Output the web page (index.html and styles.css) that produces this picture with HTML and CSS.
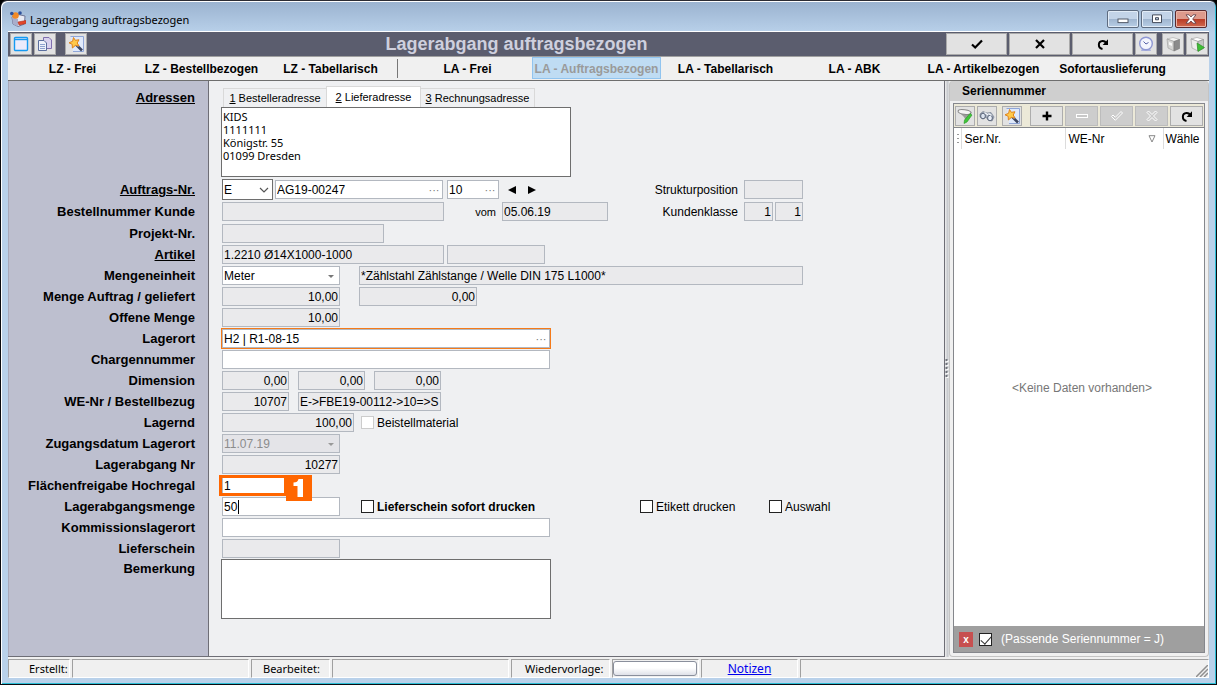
FILE: index.html
```
<!DOCTYPE html>
<html lang="de">
<head>
<meta charset="utf-8">
<title>Lagerabgang auftragsbezogen</title>
<link rel="stylesheet" href="styles.css">
</head>
<body>
<svg class="defs" aria-hidden="true">
  <symbol id="i-check" viewBox="0 0 12 12"><path d="M1 6.5 4.2 9.5 11 2.5" fill="none" stroke="currentColor" stroke-width="2.2"/></symbol>
  <symbol id="i-x" viewBox="0 0 12 12"><path d="M2 2 10 10M10 2 2 10" fill="none" stroke="currentColor" stroke-width="2.2"/></symbol>
  <symbol id="i-redo" viewBox="0 0 12 12"><path d="M5.500 11C0.500 10 .8 3.300 5.500 3 7 2.900 8.300 3.500 9.300 5" fill="none" stroke="currentColor" stroke-width="2"/><path d="M11 1.300V7H5.600Z" fill="currentColor"/></symbol>
  <symbol id="i-wand" viewBox="0 0 16 16"><path d="M2.5 .5H15.5V15.5H5" fill="#dfe9fb" stroke="#8fa6d8"/><path d="M8 8.5 14 14.5" stroke="#3b4560" stroke-width="2.6"/><path d="M9 9 10.5 10.5" stroke="#9aa4c0" stroke-width="1.4"/><path d="M5.5 1.5 7.3 4.3 11 3.8 9.2 7 11 10 7.4 9.4 4.4 12 4.2 8.3 1 6.8 4.6 5.3Z" fill="#ffc94a" stroke="#e0851c"/></symbol>
  <symbol id="i-box" viewBox="0 0 16 16"><path d="M2 3 8 1.5 14.5 3.5 9 5.5Z" fill="#f4f4f2" stroke="#aaa" stroke-width=".6"/><path d="M2 3 9 5.5V15L3 12Z" fill="#d4d4d2" stroke="#999" stroke-width=".6"/><path d="M9 5.5 14.5 3.5V12.5L9 15Z" fill="#8b8b8b" stroke="#777" stroke-width=".6"/><path d="M4 6 7 7.2V10L4 8.8Z" fill="#f8f8f8"/></symbol>
  <symbol id="i-boxlight" viewBox="0 0 16 16"><path d="M2 3 8 1.5 14.5 3.500 9 5.5Z" fill="#fff" stroke="#999" stroke-width=".6"/><path d="M2 3 9 5.5V15L3 12Z" fill="#ececea" stroke="#999" stroke-width=".6"/><path d="M9 5.500 14.5 3.5V12.5L9 15Z" fill="#c4c6c4" stroke="#888" stroke-width=".6"/></symbol>
</svg>
<div class="window">
  <header class="titlebar">
    <svg class="app-icon" viewBox="0 0 16 16" aria-hidden="true"><path d="M2 6 6 3 15 5 14.5 13 8 15.5 3 13Z" fill="#e9ebf4" stroke="#6f7494"/><path d="M2 6 8 8V15.5L3 13Z" fill="#a9aecb"/><circle cx="5.500" cy="4.500" r="3.300" fill="#f28a26"/><circle cx="1.800" cy="2.500" r="1.800" fill="#2d519c"/><circle cx="10" cy="2" r="1.800" fill="#2d519c"/><path d="M8 11 16 9.500V12.500L9 14Z" fill="#e2472b" stroke="#b02b18" stroke-width=".6"/></svg>
    <span class="title">Lagerabgang auftragsbezogen</span>
    <div class="win-buttons">
      <button type="button" aria-label="Minimieren"><svg viewBox="0 0 12 10"><rect x="1" y="5" width="10" height="3.6" fill="#fff" stroke="#555c6b"/></svg></button>
      <button type="button" aria-label="Maximieren"><svg viewBox="0 0 12 10"><path d="M1.5 .9H10.5V8.6H1.5ZM4.5 3.7H7.5V5.8H4.5Z" fill="#fff" fill-rule="evenodd" stroke="#444b5a"/></svg></button>
      <button type="button" class="win-close" aria-label="Schließen"><svg viewBox="0 0 12 10"><path d="M1 .8H4L6 3 8 .8H11L7.7 5 11 9.2H8L6 7 4 9.2H1L4.300 5Z" fill="#fff" stroke="#5b3a44" stroke-width=".8"/></svg></button>
    </div>
  </header>
  <div class="client">
    <div class="toolbar">
      <div class="tools">
        <button type="button" aria-label="Fenster"><svg viewBox="0 0 16 16"><rect x="1.5" y="1.500" width="13" height="13" rx="1" fill="#ecebfb" stroke="#159af2" stroke-width="1.400"/><path d="M1 3.500H15" stroke="#159af2" stroke-width="1.400"/></svg></button>
        <button type="button" aria-label="Kopieren"><svg viewBox="0 0 16 16"><path d="M6.500 1.500H12L14.500 4V12.500H6.500Z" fill="#d9d2ee" stroke="#7f6fae"/><path d="M1.500 4.500H7L9.500 7V14.500H1.500Z" fill="#eef2fb" stroke="#5b6f9e"/><path d="M3 8.500H8M3 10.500H8M3 12.500H8" stroke="#8ea3cf"/></svg></button>
        <button type="button" class="wand" aria-label="Assistent"><svg><use href="#i-wand"/></svg></button>
      </div>
      <h1>Lagerabgang auftragsbezogen</h1>
      <div class="actions">
        <button type="button" class="big" aria-label="Übernehmen"><svg><use href="#i-check"/></svg></button>
        <button type="button" class="big" aria-label="Abbrechen"><svg><use href="#i-x"/></svg></button>
        <button type="button" class="big" aria-label="Aktualisieren"><svg><use href="#i-redo"/></svg></button>
        <button type="button" aria-label="Uhr"><svg viewBox="0 0 16 16"><path d="M4 12.500 3 15H13L12 12.500Z" fill="#a9b0dd"/><circle cx="8" cy="7.500" r="6.300" fill="#f3f4fd" stroke="#8f98d4" stroke-width="1.400"/><path d="M5.500 5.500 8 8 10.500 6.500" fill="none" stroke="#5560a8"/></svg></button>
        <button type="button" class="box" aria-label="Artikel"><svg><use href="#i-box"/></svg></button>
        <button type="button" aria-label="Artikel öffnen"><svg viewBox="0 0 16 16"><use href="#i-boxlight"/><path d="M8 7 15.500 11.500 9 15.500Z" fill="#3fbf35" stroke="#278a20" stroke-width=".6"/></svg></button>
      </div>
    </div>
    <nav class="modes">
      <button type="button">LZ - Frei</button>
      <button type="button">LZ - Bestellbezogen</button>
      <button type="button">LZ - Tabellarisch</button>
      <span class="sep"></span>
      <button type="button">LA - Frei</button>
      <button type="button" class="active" disabled>LA - Auftragsbezogen</button>
      <button type="button">LA - Tabellarisch</button>
      <button type="button">LA - ABK</button>
      <button type="button">LA - Artikelbezogen</button>
      <button type="button">Sofortauslieferung</button>
    </nav>
    <main class="main">
      <form class="form">
        <div class="row address">
          <a class="lbl" href="#adresse" id="l-adr">Adressen</a>
          <div class="stack">
            <div class="tabs" role="tablist">
              <button type="button" role="tab"><u>1</u> Bestelleradresse</button>
              <button type="button" role="tab" class="on" aria-selected="true"><u>2</u> Lieferadresse</button>
              <button type="button" role="tab"><u>3</u> Rechnungsadresse</button>
            </div>
            <textarea id="adresse" class="addr-text" aria-labelledby="l-adr">KIDS
1111111
Königstr. 55
01099 Dresden</textarea>
          </div>
        </div>
        <div class="rows loose">
          <div class="row">
            <a class="lbl" href="#auftrag" id="l-auf">Auftrags-Nr.</a>
            <span class="pick dark w51"><select aria-label="Auftragsart"><option>E</option></select><svg viewBox="0 0 10 10"><path d="M1 3 5 7 9 3" fill="none" stroke="#555" stroke-width="1.200"/></svg></span>
            <span class="pick w168 g2"><input id="auftrag" class="edit" aria-labelledby="l-auf" value="AG19-00247"><button type="button" class="dots" aria-label="Auftrag suchen">···</button></span>
            <span class="pick w52 g4"><input class="edit" aria-label="Position" value="10"><button type="button" class="dots" aria-label="Position suchen">···</button></span>
            <button type="button" class="step g8" aria-label="Zurück"><svg viewBox="0 0 10 8"><path d="M9 0V8L1 4Z"/></svg></button>
            <button type="button" class="step g8" aria-label="Weiter"><svg viewBox="0 0 10 8"><path d="M1 0V8L9 4Z"/></svg></button>
            <label class="side struct" for="struktur">Strukturposition</label>
            <input id="struktur" class="w59" readonly>
          </div>
          <div class="row">
            <label class="lbl" for="bestell">Bestellnummer Kunde</label>
            <input id="bestell" class="w222" readonly>
            <label class="side vom" for="vom">vom</label>
            <input id="vom" class="w106" readonly value="05.06.19">
            <label class="side klasse" for="klasse">Kundenklasse</label>
            <input id="klasse" class="w29 num" readonly value="1">
            <input class="w28 num g2" aria-label="Kundenklasse 2" readonly value="1">
          </div>
          <div class="row">
            <label class="lbl" for="projekt">Projekt-Nr.</label>
            <input id="projekt" class="w162" readonly>
          </div>
        </div>
        <div class="rows">
          <div class="row">
            <a class="lbl" href="#artikel" id="l-art">Artikel</a>
            <input id="artikel" class="w222" aria-labelledby="l-art" readonly value="1.2210 Ø14X1000-1000">
            <input class="w98 g3" aria-label="Artikel Zusatz" readonly>
          </div>
          <div class="row">
            <label class="lbl" for="einheit">Mengeneinheit</label>
            <span class="pick w118"><select id="einheit"><option>Meter</option></select><svg viewBox="0 0 10 10"><path d="M2 4H8L5 7Z" fill="#777"/></svg></span>
            <input class="w444 g19" aria-label="Bezeichnung" readonly value="*Zählstahl Zählstange / Welle DIN 175 L1000*">
          </div>
          <div class="row">
            <label class="lbl" for="menge">Menge Auftrag / geliefert</label>
            <input id="menge" class="w118 num" readonly value="10,00">
            <input class="w118 num g19" aria-label="Menge geliefert" readonly value="0,00">
          </div>
          <div class="row">
            <label class="lbl" for="offen">Offene Menge</label>
            <input id="offen" class="w118 num" readonly value="10,00">
          </div>
          <div class="row">
            <label class="lbl" for="lagerort">Lagerort</label>
            <span class="pick w328 marked"><input id="lagerort" class="edit" value="H2 | R1-08-15"><button type="button" class="dots" aria-label="Lagerort suchen">···</button></span>
          </div>
          <div class="row">
            <label class="lbl" for="charge">Chargennummer</label>
            <input id="charge" class="edit w328">
          </div>
          <div class="row">
            <label class="lbl" for="dim">Dimension</label>
            <input id="dim" class="w67 num" readonly value="0,00">
            <input class="w67 num g9" aria-label="Dimension 2" readonly value="0,00">
            <input class="w67 num g9" aria-label="Dimension 3" readonly value="0,00">
          </div>
          <div class="row">
            <label class="lbl" for="wenr">WE-Nr / Bestellbezug</label>
            <input id="wenr" class="w67 num" readonly value="10707">
            <input class="w143 g9 tight" aria-label="Bestellbezug" readonly value="E-&gt;FBE19-00112-&gt;10=&gt;S">
          </div>
          <div class="row">
            <label class="lbl" for="lagernd">Lagernd</label>
            <input id="lagernd" class="w132 num" readonly value="100,00">
            <label class="check g7 off"><input type="checkbox" disabled>Beistellmaterial</label>
          </div>
          <div class="row">
            <label class="lbl" for="zugang">Zugangsdatum Lagerort</label>
            <span class="pick w118 disabled"><select id="zugang" disabled><option>11.07.19</option></select><svg viewBox="0 0 10 10"><path d="M2 4H8L5 7Z" fill="#999"/></svg></span>
          </div>
          <div class="row">
            <label class="lbl" for="abgangnr">Lagerabgang Nr</label>
            <input id="abgangnr" class="w118 num" readonly value="10277">
          </div>
          <div class="row">
            <label class="lbl" for="flaeche">Flächenfreigabe Hochregal</label>
            <span class="pick w64 callout"><input id="flaeche" class="edit" value="1"><span class="frame"></span><svg class="badge" viewBox="0 0 26 26" role="img" aria-label="Schritt 1"><rect width="26" height="26" fill="#f60"/><path d="M17 4V22H11.500V11H7.500V7.500C10.500 7.500 12 6.500 12.500 4Z" fill="#fff"/></svg></span>
          </div>
          <div class="row">
            <label class="lbl" for="abgangsmenge">Lagerabgangsmenge</label>
            <span class="pick w118"><input id="abgangsmenge" class="edit" value="50"><span class="caret"></span></span>
            <label class="check bold g21"><input type="checkbox">Lieferschein sofort drucken</label>
            <label class="check etikett"><input type="checkbox">Etikett drucken</label>
            <label class="check auswahl"><input type="checkbox">Auswahl</label>
          </div>
          <div class="row">
            <label class="lbl" for="kommission">Kommissionslagerort</label>
            <input id="kommission" class="edit w328">
          </div>
          <div class="row">
            <label class="lbl" for="lieferschein">Lieferschein</label>
            <input id="lieferschein" class="w118" readonly>
          </div>
          <div class="row note">
            <label class="lbl" for="bemerkung">Bemerkung</label>
            <textarea id="bemerkung" class="note-text"></textarea>
          </div>
        </div>
      </form>
      <div class="splitter"><svg viewBox="0 0 4 20" aria-hidden="true"><path d="M2.500 1V20" stroke="#fff" stroke-width="2" stroke-dasharray="2 2"/><path d="M1.500 0V20" stroke="#70747c" stroke-width="2" stroke-dasharray="2 2"/></svg></div>
      <aside class="panel">
        <h2>Seriennummer</h2>
        <div class="panel-body">
          <div class="grid-tools">
            <button type="button" aria-label="Filter"><svg viewBox="0 0 16 16"><path d="M1 3 7 9 9 13 11 12 10.500 9 15 4Z" fill="#9a9c9a"/><ellipse cx="7.500" cy="4" rx="6.500" ry="2.300" fill="#f4f4f4" stroke="#888" transform="rotate(8 7.500 4)"/><path d="M7.500 12 13 5.500 15 7 10 14 7 15.500Z" fill="#3fc63a" stroke="#25951f" stroke-width=".6"/></svg></button>
            <button type="button" aria-label="Suchen"><svg viewBox="0 0 16 16"><path d="M1 6 4 3.500 8 5 12 4.500 15 9 13 13 9 12 7 9 4 11 1 9Z" fill="#a9b2c0" stroke="#6a7485" stroke-width=".6"/><ellipse cx="4" cy="8" rx="2.400" ry="2.800" fill="#dbe3ef" stroke="#596377"/><ellipse cx="11" cy="10" rx="2.400" ry="2.800" fill="#e8eef7" stroke="#596377"/><path d="M5.500 4.500 9 7M9.500 5.500 12.500 7.500" stroke="#f4f7fb" stroke-width="1.200"/></svg></button>
            <button type="button" class="wand" aria-label="Assistent"><svg><use href="#i-wand"/></svg></button>
            <button type="button" class="mid first" aria-label="Hinzufügen"><svg viewBox="0 0 12 12"><path d="M6 1.500V10.500M1.500 6H10.500" stroke="#000" stroke-width="2.400"/></svg></button>
            <button type="button" class="mid" disabled aria-label="Entfernen"><svg viewBox="0 0 12 12"><rect x=".5" y="4.500" width="11" height="3" fill="#c8c8c8" stroke="#fff"/></svg></button>
            <button type="button" class="mid" disabled aria-label="Speichern"><svg viewBox="0 0 12 12"><path d="M.5 6.500 2 5 4.300 7.300 10 1.500 11.500 3 4.300 10.300Z" fill="#c8c8c8" stroke="#fff"/></svg></button>
            <button type="button" class="mid" disabled aria-label="Verwerfen"><svg viewBox="0 0 12 12"><path d="M1 2.500 2.500 1 6 4.500 9.500 1 11 2.500 7.500 6 11 9.500 9.500 11 6 7.500 2.500 11 1 9.500 4.500 6Z" fill="#c8c8c8" stroke="#fff"/></svg></button>
            <button type="button" class="mid" aria-label="Aktualisieren"><svg><use href="#i-redo"/></svg></button>
          </div>
          <table class="grid">
            <thead><tr><th class="c0" aria-label="Markierung"><svg viewBox="0 0 2 12" aria-hidden="true"><path d="M1 1V11" stroke="#333" stroke-dasharray="1 3"/></svg></th><th class="c1">Ser.Nr.</th><th class="c2"><span>WE-Nr<svg viewBox="0 0 8 8" aria-hidden="true"><path d="M1 .7H7L4 7Z" fill="none" stroke="#888"/></svg></span></th><th class="c3">Wähle</th></tr></thead>
          </table>
          <p class="empty">&lt;Keine Daten vorhanden&gt;</p>
          <div class="filter">
            <button type="button" aria-label="Filter entfernen">x</button>
            <label class="check"><input type="checkbox" checked>(Passende Seriennummer = J)</label>
          </div>
        </div>
      </aside>
    </main>
    <footer class="status">
      <span class="s-erst">Erstellt:</span>
      <span class="s-wide"></span>
      <span class="s-bearb">Bearbeitet:</span>
      <span class="s-wide"></span>
      <span class="s-wied">Wiedervorlage:</span>
      <span class="s-date"><button type="button" aria-label="Wiedervorlage setzen"></button></span>
      <span class="s-not"><a href="#notizen">Notizen</a></span>
      <span class="s-rest"><svg viewBox="0 0 12 12" aria-hidden="true"><path d="M0 12 12 0M4 12 12 4M8 12 12 8" stroke="#8f8f8f" stroke-width="1.500"/></svg></span>
    </footer>
  </div>
</div>
</body>
</html>
```
FILE: styles.css
```
* { box-sizing: border-box; }
body { margin: 0; font: 12px "Liberation Sans", Arial, sans-serif; color: #000; background: #000; }
button, input, select, textarea { font: inherit; color: inherit; margin: 0; padding: 0; border: 0; border-radius: 0; }
button { background: none; }
.defs { position: absolute; width: 0; height: 0; }

.window { min-height: 100vh; display: flex; flex-direction: column; padding: 0 7px 6px; border: 1px solid #0b0b10; border-top-color: #2b2b33; border-radius: 7px 7px 0 0; background: linear-gradient(#9ab2cf, #b9d1ea 32px); box-shadow: inset 1px 1px #fff, inset -1px -1px #2cbfd6; }
.titlebar { display: flex; align-items: center; height: 30px; padding: 6px 2px 0; }
.app-icon { width: 16px; height: 16px; margin-right: 4px; }
.title { flex: 1; font: 11px "Noto Sans", sans-serif; }
.win-buttons { display: flex; gap: 2px; }
.win-buttons button { display: grid; place-items: center; width: 32px; height: 18px; border: 1px solid #5e6c80; border-radius: 2px; background: linear-gradient(#c3d4e8 48%, #9fb5cf 50%, #b8cee6); box-shadow: inset 0 0 0 1px #e2ecf7; }
.win-buttons svg { width: 12px; height: 10px; }
.win-buttons .win-close { border-color: #5a2a2e; background: linear-gradient(#dd9a8c 48%, #b83a24 50%, #d06a50); box-shadow: inset 0 0 0 1px #eab5a8; }

.client { flex: 1; display: flex; flex-direction: column; border-top: 1px solid #fff; background: #f0f0f0; }
.toolbar { display: flex; align-items: center; height: 25px; padding: 0 1px 0 2px; border-bottom: 1px solid #a0a0a0; background: #5b5d6e; }
.toolbar h1 { flex: 1; margin: 0; text-align: center; font-size: 18px; color: #ced0de; }
.tools, .actions { display: flex; gap: 2px; }
.toolbar button { display: grid; place-items: center; width: 22px; height: 22px; border: 1px solid #aaa; background: #e2e2e2; }
.toolbar button svg { width: 16px; height: 16px; }
.toolbar .big { width: 61px; }
.toolbar .big svg { width: 12px; height: 12px; }
.tools .wand { margin-left: 7px; }
.toolbar .box { margin-left: 3px; }

.modes { display: flex; height: 24px; border-bottom: 1px solid #6e6e6e; }
.modes button { flex: 0 1 129px; height: 22px; padding-top: 2px; font-weight: bold; white-space: nowrap; }
.modes .active { border: 1px solid #91c4ef; background: #bfdcf3; color: #9a9a9a; }
.modes .sep { width: 1px; margin: 2px 5px 2px 2px; background: #777; }

.main { flex: 1; display: flex; }
.form { flex: 1; padding-top: 5px; border-right: 1px solid #6e6e76; border-bottom: 1px solid #6e6e76; background: linear-gradient(90deg, #a9a9ba 1px, #bdbfcf 1px 200px, #6e6e76 200px 201px, #eff0f2 201px); }
.rows { display: flex; flex-direction: column; gap: 2px; }
.rows.loose { gap: 3px; margin: 3px 0 2px; }
.row { display: flex; align-items: center; height: 19px; }
.lbl { flex: none; width: 187px; margin-right: 27px; text-align: right; font-weight: bold; font-size: 13px; color: #000; white-space: nowrap; }
.row.address, .row.note { align-items: flex-start; height: auto; }
.address .lbl, .note .lbl { margin-right: 26px; }
.address .lbl { padding-top: 4px; }
.note .lbl { padding-top: 2px; }
.note { margin-top: -1px; }

.row input:not([type]), .pick { flex: none; height: 19px; border: 1px solid #b3b8c0; background: #eaeaec; }
.row input:not([type]) { padding: 0 1px; }
.row input.tight { padding-right: 0; }
.row .num { text-align: right; }
.row input.edit { background: #fff; }
.pick { position: relative; display: flex; align-items: center; background: #fff; }
.pick input.edit, .pick select { flex: 1; min-width: 0; height: 100%; border: 0; padding: 0 1px; background: none; appearance: none; }
.pick > svg:not(.badge) { position: absolute; right: 3px; width: 10px; height: 10px; pointer-events: none; }
.pick.dark { height: 21px; border-color: #6e6e6e; }
.pick.disabled { background: #e4e4e8; }
.pick.disabled select { color: #8c8c8c; opacity: 1; }
.dots { width: 16px; height: 14px; font-size: 11px; line-height: 14px; color: #777; }
.marked { outline: 1px solid #f47a1a; }
.callout { z-index: 1; }
.callout .frame { position: absolute; inset: -2px -2px -2px -4px; border: 3px solid #f60; pointer-events: none; }
.callout .badge { position: absolute; left: 63px; top: -2px; width: 26px; height: 26px; }
.caret { position: absolute; left: 15px; top: 2px; width: 1px; height: 14px; background: #000; }
.step { width: 12px; height: 12px; }
.step svg { display: block; width: 10px; height: 8px; }

.w28 { width: 28px; } .w29 { width: 29px; } .w51 { width: 51px; } .w52 { width: 52px; } .w59 { width: 59px; }
.w64 { width: 64px; } .w67 { width: 67px; } .w98 { width: 98px; } .w106 { width: 106px; } .w118 { width: 118px; }
.w132 { width: 132px; } .w143 { width: 143px; } .w162 { width: 162px; } .w168 { width: 168px; } .w222 { width: 222px; }
.w328 { width: 328px; } .w444 { width: 444px; }
.g2 { margin-left: 2px; } .g3 { margin-left: 3px; } .g4 { margin-left: 4px; } .g7 { margin-left: 7px; }
.g8 { margin-left: 8px; } .g9 { margin-left: 9px; } .g19 { margin-left: 19px; } .g21 { margin-left: 21px; }

.side { flex: none; padding-right: 6px; text-align: right; }
.side.struct { width: 205px; }
.side.vom { width: 58px; font-size: 11px; }
.side.klasse { width: 136px; }
.check { flex: none; display: flex; align-items: center; gap: 3px; white-space: nowrap; }
.check.bold { font-weight: bold; width: 279px; }
.check.etikett { width: 129px; }
.check input { appearance: none; width: 13px; height: 13px; border: 1px solid #222; background: #fff; }
.check.off input { border-color: #ccc; }

.tabs { display: flex; align-items: flex-end; height: 21px; padding-left: 2px; }
.tabs button { flex: none; width: 103px; height: 19px; border: 1px solid #d9d9d9; border-bottom: 0; font-size: 11px; white-space: nowrap; }
.tabs .on { width: 95px; height: 21px; background: #fff; }
.tabs button:last-child { width: 114px; border-left: 0; }
.tabs button:first-child { border-right: 0; }
textarea { display: block; border: 1px solid #6e6e6e; background: #fff; resize: none; }
textarea.addr-text { width: 350px; height: 70px; padding: 2px 1px; font: 11px/13px "Noto Sans", sans-serif; }
textarea.note-text { width: 330px; height: 60px; }

.splitter { display: grid; place-items: center; width: 4px; background: linear-gradient(90deg, #eee, #c3c6cb 70%, #e5e5e5); }
.splitter svg { width: 4px; height: 20px; }
.panel { display: flex; flex-direction: column; width: 260px; padding: 0 3px 3px; border: 1px solid #c4c4c4; border-top: 0; border-radius: 4px; background: linear-gradient(#cfcfcf 20px, #f0f0f0 20px); }
.panel h2 { margin: 0; padding-left: 9px; font-size: 12px; line-height: 20px; }
.panel-body { flex: 1; display: flex; flex-direction: column; margin-top: 2px; border: 1px solid #85878c; background: #fff; }
.grid-tools { display: flex; align-items: center; gap: 2px; height: 24px; padding: 1px; background: #ece9d8; border-bottom: 1px solid #85878c; }
.grid-tools button { display: grid; place-items: center; flex: none; width: 20px; height: 20px; border: 1px solid #adadad; background: #e2e2e2; }
.grid-tools svg { width: 16px; height: 16px; }
.grid-tools .wand { margin-left: 3px; }
.grid-tools .mid { width: 33px; }
.grid-tools .mid svg { width: 12px; height: 12px; }
.grid-tools .first { margin-left: 6px; }
.grid-tools button:disabled { background: #cdcdcd; border-color: #bcbcbc; }
.grid { width: 100%; table-layout: fixed; border-collapse: collapse; }
.grid th { height: 21px; padding: 0 0 0 3px; border-right: 1px solid #dcdcdc; text-align: left; font-weight: normal; white-space: nowrap; }
.grid th.c0 { width: 7px; }
.c0 svg { display: block; width: 2px; height: 12px; }
.grid .c1 { width: 104px; }
.grid .c2 { width: 98px; }
.grid th.c3 { padding-left: 2px; border-right: 0; }
.grid span { display: flex; align-items: center; justify-content: space-between; padding-right: 7px; }
.grid span svg { width: 8px; height: 8px; }
.empty { flex: 1; display: grid; place-items: center; margin: 0; padding-left: 6px; color: #777; }
.filter { display: flex; align-items: center; gap: 6px; height: 26px; padding-left: 5px; background: #9f9f9f; color: #fff; }
.filter button { width: 14px; height: 15px; background: #c75050; font: bold 10px/13px "Liberation Sans", sans-serif; }
.filter .check { gap: 9px; }
.filter input { position: relative; }
.filter input::after { content: ""; position: absolute; left: 3px; top: 0; width: 5px; height: 9px; border: solid #333; border-width: 0 1px 1px 0; transform: rotate(42deg); }

.status { display: flex; gap: 2px; height: 21px; padding-top: 2px; font: 11px "Noto Sans", sans-serif; }
.status span { display: flex; align-items: center; flex: none; border: 1px solid #a0a0a0; border-right-color: #fff; border-bottom-color: #fff; }
.status .s-erst { width: 62px; padding-left: 20px; }
.status .s-wide { width: 177px; }
.status .s-bearb { width: 79px; padding-left: 11px; }
.status .s-wied { width: 99px; padding-left: 13px; }
.status .s-date { width: 87px; }
.s-date button { width: 84px; height: 15px; border: 1px solid #8a8f9c; border-radius: 3px; background: linear-gradient(#fff, #fff 45%, #dfe1e8); }
.status .s-not { width: 97px; justify-content: center; font-size: 12px; }
.s-not a { color: #00e; }
.status .s-rest { flex: 1; align-items: flex-end; justify-content: flex-end; }
.s-rest svg { width: 12px; height: 12px; }
```
